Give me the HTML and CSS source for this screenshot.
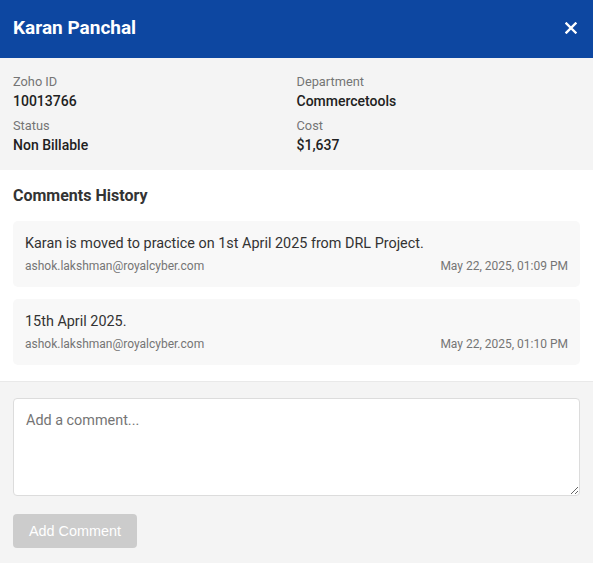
FILE: index.html
```
<!DOCTYPE html>
<html>
<head>
<meta charset="utf-8">
<link rel="stylesheet" href="styles.css">
</head>
<body>
<div class="panel">
  <header class="header">
    <h1 class="title">Karan Panchal</h1>
    <button class="close" aria-label="Close">
      <svg width="12" height="12" viewBox="0 0 12 12"><path d="M1.5 1.5 L10.5 10.5 M10.5 1.5 L1.5 10.5" stroke="#fff" stroke-width="2.4" stroke-linecap="square"/></svg>
    </button>
  </header>
  <section class="info">
    <div class="field"><div class="label">Zoho ID</div><div class="value">10013766</div></div>
    <div class="field"><div class="label">Department</div><div class="value">Commercetools</div></div>
    <div class="field"><div class="label">Status</div><div class="value">Non Billable</div></div>
    <div class="field"><div class="label">Cost</div><div class="value">$1,637</div></div>
  </section>
  <section class="history">
    <h2 class="history-title">Comments History</h2>
    <div class="comment">
      <div class="comment-text">Karan is moved to practice on 1st April 2025 from DRL Project.</div>
      <div class="comment-meta"><span>ashok.lakshman@royalcyber.com</span><span>May 22, 2025, 01:09 PM</span></div>
    </div>
    <div class="comment">
      <div class="comment-text">15th April 2025.</div>
      <div class="comment-meta"><span>ashok.lakshman@royalcyber.com</span><span>May 22, 2025, 01:10 PM</span></div>
    </div>
  </section>
  <section class="compose">
    <textarea class="input" placeholder="Add a comment..."></textarea>
    <button class="submit" disabled>Add Comment</button>
  </section>
</div>
</body>
</html>
```
FILE: styles.css
```
html, body {
  margin: 0;
  padding: 0;
  background: #fff;
}
body {
  font-family: Roboto, "Noto Sans", sans-serif;
  width: 593px;
  height: 563px;
  overflow: hidden;
}
.panel {
  display: flex;
  flex-direction: column;
}
.header {
  height: 58px;
  background: #0d47a1;
  display: flex;
  align-items: center;
  justify-content: space-between;
  padding: 0 13px;
  box-sizing: border-box;
}
.title {
  margin: 0;
  color: #fff;
  font-size: 19px;
  font-weight: 700;
  line-height: 24px;
  position: relative;
  top: -1px;
}
.close {
  background: none;
  border: 0;
  padding: 0;
  width: 14px;
  height: 14px;
  display: flex;
  align-items: center;
  justify-content: center;
  margin-right: 2px;
  position: relative;
  top: -1px;
}
.info {
  background: #f4f4f4;
  padding: 15px 13px 15px;
  display: grid;
  grid-template-columns: 1fr 1fr;
  row-gap: 6px;
}
.label {
  font-size: 12.8px;
  line-height: 16px;
  color: #757575;
  position: relative;
  top: 1px;
}
.value {
  margin-top: 2px;
  font-size: 14px;
  line-height: 20px;
  font-weight: 500;
  color: #212121;
}
.history {
  padding: 16px 13px 16px;
  display: flex;
  flex-direction: column;
  gap: 12px;
}
.history-title {
  margin: 0 0 3px;
  font-size: 16px;
  line-height: 20px;
  font-weight: 700;
  color: #333;
}
.comment {
  background: #f8f8f8;
  border-radius: 5px;
  padding: 12px 12px 13px;
}
.comment-text {
  font-size: 14.4px;
  line-height: 21px;
  color: #333;
}
.comment-meta {
  margin-top: 4px;
  display: flex;
  justify-content: space-between;
  font-size: 12px;
  line-height: 16px;
  color: #757575;
}
.compose {
  background: #f4f4f4;
  border-top: 1px solid #e9e9e9;
  padding: 16px 13px 15px;
  display: flex;
  flex-direction: column;
  align-items: flex-start;
  gap: 18px;
  flex: 1;
}
.input {
  width: 100%;
  height: 98px;
  box-sizing: border-box;
  border: 1px solid #dcdcdc;
  border-radius: 4px;
  background: #fff;
  padding: 12px;
  font-family: Roboto, "Noto Sans", sans-serif;
  font-size: 14.4px;
  line-height: 20px;
  color: #333;
  margin: 0;
}
.input::placeholder {
  color: #757575;
}
.submit {
  height: 34px;
  padding: 0 16px;
  border: 0;
  border-radius: 4px;
  background: #cccccc;
  color: #fff;
  font-family: "Liberation Sans", Arial, sans-serif;
  font-size: 14.4px;
}
```
